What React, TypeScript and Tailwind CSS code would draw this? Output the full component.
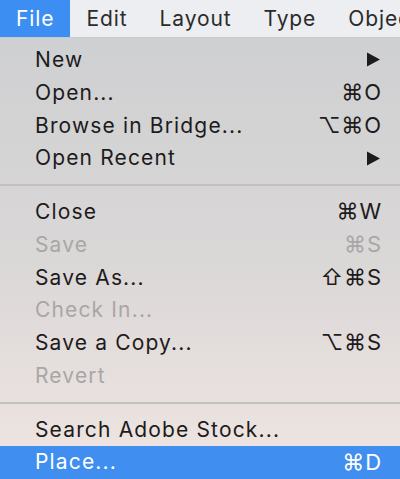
type Item = {
  label: string;
  shortcut?: string;
  submenu?: boolean;
  disabled?: boolean;
  active?: boolean;
};

const groups: Item[][] = [
  [
    { label: "New", submenu: true },
    { label: "Open...", shortcut: "⌘O" },
    { label: "Browse in Bridge...", shortcut: "⌥⌘O" },
    { label: "Open Recent", submenu: true },
  ],
  [
    { label: "Close", shortcut: "⌘W" },
    { label: "Save", shortcut: "⌘S", disabled: true },
    { label: "Save As...", shortcut: "⇧⌘S" },
    { label: "Check In...", disabled: true },
    { label: "Save a Copy...", shortcut: "⌥⌘S" },
    { label: "Revert", disabled: true },
  ],
  [
    { label: "Search Adobe Stock..." },
    { label: "Place...", shortcut: "⌘D", active: true },
  ],
];

const menus = ["File", "Edit", "Layout", "Type", "Object"];

function MenuRow({ item }: { item: Item }) {
  const tone = item.active
    ? "bg-[#3f8ef0] text-white"
    : item.disabled
      ? "text-[#a9a6a6]"
      : "text-[#1d1b1b]";

  return (
    <div className={`flex h-[32.75px] items-center justify-between pl-[35px] pr-[18px] ${tone}`}>
      <span className="whitespace-nowrap tracking-[1.15px]">{item.label}</span>
      {item.submenu && (
        <svg width="15" height="15" viewBox="0 0 15 15" className="mr-px">
          <path d="M1 0.5 L14 7.5 L1 14.5 Z" fill="currentColor" />
        </svg>
      )}
      {item.shortcut && <span className="whitespace-nowrap text-[22px]">{item.shortcut}</span>}
    </div>
  );
}

export default function App() {
  return (
    <div className="h-[479px] w-[400px] overflow-hidden font-['Inter','DejaVu_Sans',sans-serif] text-[21px] tracking-[0.9px]">
      <nav className="flex h-[38px] items-center overflow-hidden border-b border-[#c9cacd] bg-[#eceef1] text-[#2b2b2b]">
        {menus.map((m, i) => (
          <div
            key={m}
            className={`flex h-full shrink-0 items-center px-[16px] ${i === 0 ? "bg-[#3d8ef2] text-white" : ""}`}
          >
            {m}
          </div>
        ))}
      </nav>

      <div className="bg-gradient-to-b from-[#cfd0d2] via-[#dad7d7] to-[#f0e6e2] pt-[5.5px]">
        {groups.map((g, gi) => (
          <div key={gi}>
            {gi > 0 && (
              <div className="flex h-[21px] items-center">
                <div className="h-[2px] w-full bg-[#c2c1c2]" />
              </div>
            )}
            {g.map((item) => (
              <MenuRow key={item.label} item={item} />
            ))}
          </div>
        ))}
      </div>
    </div>
  );
}
